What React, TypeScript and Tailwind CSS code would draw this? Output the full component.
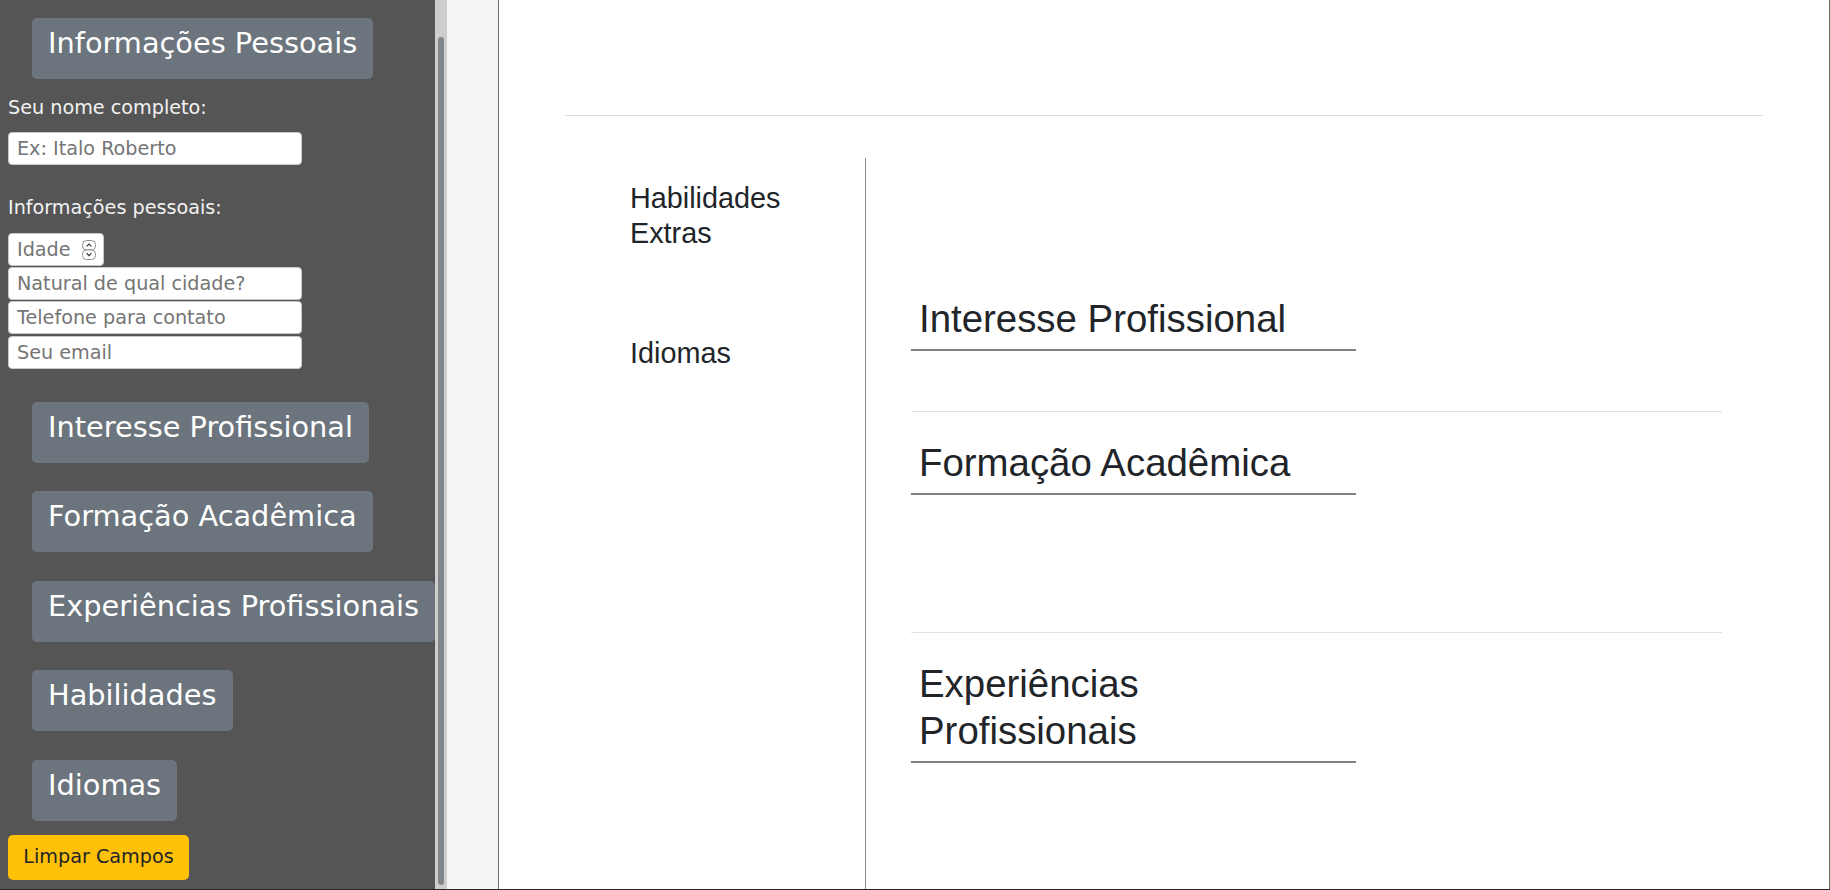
import React from 'react';

const sectionButtons = ['Interesse Profissional', 'Formação Acadêmica', 'Experiências Profissionais', 'Habilidades', 'Idiomas'];

function SideButton({ label, className = '' }: { label: string; className?: string }) {
  return (
    <button
      type="button"
      className={`flex h-[61px] shrink-0 items-start self-start whitespace-nowrap rounded-[5px] bg-[#6c757d] px-4 pt-[8px] text-[28.8px] leading-[34px] text-white ${className}`}
    >
      {label}
    </button>
  );
}

function TextInput({ placeholder }: { placeholder: string }) {
  return (
    <input
      type="text"
      placeholder={placeholder}
      className="h-[33px] w-[294px] shrink-0 rounded-[4px] border border-[#c9c9c9] bg-white pl-[8px] text-[19.2px] text-[#212529] outline-none placeholder:text-[#757575]"
    />
  );
}

function AgeInput() {
  return (
    <div className="flex h-[33px] w-[96px] shrink-0 items-center rounded-[4px] border border-[#c9c9c9] bg-white">
      <input
        type="text"
        placeholder="Idade"
        className="h-full min-w-0 flex-1 bg-transparent pl-[8px] text-[19.2px] text-[#212529] outline-none placeholder:text-[#757575]"
      />
      <svg width="14" height="20" viewBox="0 0 14 20" className="mr-[7px] shrink-0">
        <rect x="0.5" y="0.5" width="13" height="9.5" rx="4" fill="#fff" stroke="#8f8f8f" />
        <rect x="0.5" y="10" width="13" height="9.5" rx="4" fill="#fff" stroke="#8f8f8f" />
        <path d="M4.6 6.4 L7 4 L9.4 6.4" fill="none" stroke="#333" strokeWidth="1.2" />
        <path d="M4.6 13.2 L7 15.6 L9.4 13.2" fill="none" stroke="#333" strokeWidth="1.2" />
      </svg>
    </div>
  );
}

function Sidebar() {
  return (
    <div className="flex h-full w-[447px] shrink-0">
      <aside className="flex h-full w-[435px] flex-col overflow-hidden bg-[#555555] pl-2 pt-[18px] font-['DejaVu_Sans',sans-serif]">
        <SideButton label="Informações Pessoais" className="ml-6" />

        <label className="mt-[14.5px] text-[19.2px] leading-[28px] text-[#f2f2f2]">Seu nome completo:</label>
        <div className="mt-[10.8px]">
          <TextInput placeholder="Ex: Italo Roberto" />
        </div>

        <label className="mt-[29.2px] text-[19.2px] leading-[28px] text-[#f2f2f2]">Informações pessoais:</label>
        <div className="mt-[10.8px] flex flex-col gap-[1.1px]">
          <AgeInput />
          <TextInput placeholder="Natural de qual cidade?" />
          <TextInput placeholder="Telefone para contato" />
          <TextInput placeholder="Seu email" />
        </div>

        <div className="mt-[33.4px] flex flex-col gap-[28.5px]">
          {sectionButtons.map((b) => (
            <SideButton key={b} label={b} className="ml-6" />
          ))}
        </div>

        <button
          type="button"
          className="mt-[14px] flex h-[45px] w-[181px] shrink-0 items-center justify-center rounded-[5px] bg-[#ffc107] text-[19.2px] text-[#212529]"
        >
          Limpar Campos
        </button>
      </aside>
      <div className="flex h-full w-[12px] flex-col bg-[#cdcdcd]">
        <div className="mx-auto mt-[37px] h-[848px] w-[6px] rounded-full bg-[#80868a]" />
      </div>
    </div>
  );
}

function Heading({ children }: { children: React.ReactNode }) {
  return (
    <h2 className="w-[445px] border-b-2 border-[#808080] pb-[7px] pl-[8px] text-[38.4px] font-normal leading-[47px] text-[#212529]">
      {children}
    </h2>
  );
}

function Resume() {
  return (
    <div className="flex h-full flex-1 flex-col overflow-hidden border-x border-[#6b6b6b] bg-white px-[66px] font-['Liberation_Sans',Arial,sans-serif]">
      <div className="h-[115px] shrink-0" />
      <div className="border-t border-[#dedede]" />

      <div className="mt-[42px] flex flex-1">
        <div className="w-[301px] shrink-0 border-r border-[#8a8a8a] pl-[65px] pr-[58px] pt-[23px] text-[28.8px] leading-[35px] text-[#212529]">
          <p>Habilidades Extras</p>
          <p className="mt-[85px]">Idiomas</p>
        </div>

        <div className="flex flex-1 flex-col pl-[45px] pr-[41px] pt-[137px]">
          <Heading>Interesse Profissional</Heading>
          <div className="h-[60px]" />
          <div className="border-t border-[#e2e2e2] pt-[27px]">
            <Heading>Formação Acadêmica</Heading>
            <div className="h-[137px]" />
          </div>
          <div className="border-t border-[#e2e2e2] pt-[27px]">
            <Heading>Experiências Profissionais</Heading>
          </div>
        </div>
      </div>
    </div>
  );
}

export default function App() {
  return (
    <div className="flex h-[890px] w-[1830px] flex-col overflow-hidden">
      <div className="flex h-[889px] w-full">
        <Sidebar />
        <main className="flex h-full flex-1 bg-[#f4f4f4] pl-[51px]">
          <Resume />
        </main>
      </div>
      <div className="h-px w-full bg-[#262626]" />
    </div>
  );
}
